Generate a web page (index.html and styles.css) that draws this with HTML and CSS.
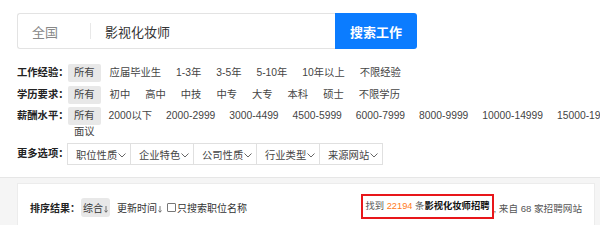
FILE: index.html
```html
<!DOCTYPE html>
<html lang="zh-CN">
<head>
<meta charset="utf-8">
<title>影视化妆师招聘</title>
<link rel="stylesheet" href="styles.css">
</head>
<body>
<div class="page">
  <div class="top">
    <div class="search">
      <div class="search-box">
        <span class="city">全国</span>
        <span class="divider"></span>
        <span class="keyword">影视化妆师</span>
      </div>
      <button class="search-btn">搜索工作</button>
    </div>

    <div class="filters">
      <div class="filter-row">
        <div class="label">工作经验：</div>
        <ul class="options">
          <li class="active">所有</li><li>应届毕业生</li><li>1-3年</li><li>3-5年</li><li>5-10年</li><li>10年以上</li><li>不限经验</li>
        </ul>
      </div>
      <div class="filter-row">
        <div class="label">学历要求：</div>
        <ul class="options">
          <li class="active">所有</li><li>初中</li><li>高中</li><li>中技</li><li>中专</li><li>大专</li><li>本科</li><li>硕士</li><li>不限学历</li>
        </ul>
      </div>
      <div class="filter-row salary">
        <div class="label">薪酬水平：</div>
        <ul class="options">
          <li class="active">所有</li><li>2000以下</li><li>2000-2999</li><li>3000-4499</li><li>4500-5999</li><li>6000-7999</li><li>8000-9999</li><li>10000-14999</li><li>15000-19999</li><li>面议</li>
        </ul>
      </div>
      <div class="more-row">
        <div class="label">更多选项：</div>
        <div class="drops">
          <div class="drop">职位性质<svg class="chev" viewBox="0 0 8 5" width="8" height="5"><path d="M0.5 0.5 L4 4 L7.5 0.5" fill="none" stroke="#666" stroke-width="1"/></svg></div>
          <div class="drop">企业特色<svg class="chev" viewBox="0 0 8 5" width="8" height="5"><path d="M0.5 0.5 L4 4 L7.5 0.5" fill="none" stroke="#666" stroke-width="1"/></svg></div>
          <div class="drop">公司性质<svg class="chev" viewBox="0 0 8 5" width="8" height="5"><path d="M0.5 0.5 L4 4 L7.5 0.5" fill="none" stroke="#666" stroke-width="1"/></svg></div>
          <div class="drop">行业类型<svg class="chev" viewBox="0 0 8 5" width="8" height="5"><path d="M0.5 0.5 L4 4 L7.5 0.5" fill="none" stroke="#666" stroke-width="1"/></svg></div>
          <div class="drop">来源网站<svg class="chev" viewBox="0 0 8 5" width="8" height="5"><path d="M0.5 0.5 L4 4 L7.5 0.5" fill="none" stroke="#666" stroke-width="1"/></svg></div>
        </div>
      </div>
    </div>
  </div>

  <div class="results">
    <div class="card">
      <div class="sort">
        <span class="sort-label">排序结果：</span>
        <span class="sort-item active">综合<svg class="arrow" viewBox="0 0 4 7" width="4" height="7"><path d="M2 0 V6 M0.5 4.5 L2 6.3 L3.5 4.5" fill="none" stroke="#555" stroke-width="0.8"/></svg></span>
        <span class="sort-item">更新时间<svg class="arrow" viewBox="0 0 4 7" width="4" height="7"><path d="M2 0 V6 M0.5 4.5 L2 6.3 L3.5 4.5" fill="none" stroke="#555" stroke-width="0.8"/></svg></span>
        <label class="check"><span class="box"></span>只搜索职位名称</label>
      </div>
      <div class="summary">
        <span class="found">找到 <em class="num">22194</em> 条<strong>影视化妆师招聘</strong></span><span class="from">, 来自 68 家招聘网站</span>
      </div>
    </div>
  </div>
</div>
</body>
</html>
```

FILE: styles.css
```css
html, body {
  margin: 0;
  padding: 0;
  background: #fff;
  overflow: hidden;
}

body {
  font-family: "Liberation Sans", "Noto Sans CJK SC", sans-serif;
  color: #333;
}

.page {
  width: 600px;
  height: 225px;
  overflow: hidden;
}

.top {
  padding: 13px 0 12px 17px;
  border-bottom: 1px solid #e6e6e6;
}

/* search */
.search {
  display: flex;
  height: 36px;
}

.search-box {
  box-sizing: border-box;
  width: 318px;
  height: 36px;
  display: flex;
  align-items: center;
  border: 1px solid #e3e3e3;
  border-right: none;
  border-radius: 3px 0 0 3px;
  font-size: 13px;
}

.city {
  color: #888;
  margin-left: 14px;
  width: 58px;
}

.divider {
  width: 1px;
  height: 16px;
  background: #e8e8e8;
}

.keyword {
  color: #333;
  margin-left: 14px;
}

.search-btn {
  width: 82px;
  height: 36px;
  border: none;
  border-radius: 0 3px 3px 0;
  background: #0b7cff;
  color: #fff;
  font-family: inherit;
  font-size: 13px;
  font-weight: bold;
  padding: 0;
}

/* filters */
.filters {
  width: 622px;
  margin-top: 16px;
  font-size: 10.3px;
}

.filter-row {
  display: flex;
  margin-bottom: 5.5px;
}

.filter-row.salary {
  margin-bottom: 3px;
}

.label {
  width: 51px;
  flex: none;
  font-weight: bold;
  color: #222;
  line-height: 16px;
  white-space: nowrap;
}

.options {
  display: flex;
  flex-wrap: wrap;
  gap: 0 3px;
  list-style: none;
  margin: 0;
  padding: 0;
  flex: 1;
  min-width: 0;
}

.salary .options {
  gap: 0 2px;
}

.options li {
  line-height: 16px;
  height: 16px;
  padding: 0 6px;
  color: #444;
  white-space: nowrap;
}

.options li.active {
  background: #e8e8e8;
  border-radius: 2px;
  padding: 1px 6px;
  margin: -1px 0;
}

.more-row {
  display: flex;
  align-items: center;
  font-size: 10.3px;
}

.more-row .label {
  line-height: 22px;
}

.drops {
  display: flex;
  margin-left: -1px;
}

.drop {
  box-sizing: border-box;
  width: 64px;
  height: 22px;
  border: 1px solid #e0e0e0;
  margin-right: -1px;
  display: flex;
  align-items: center;
  padding-left: 8px;
  color: #444;
  white-space: nowrap;
}

.chev {
  margin-left: 1px;
  margin-top: 3px;
}

/* results */
.results {
  background: #f5f5f5;
  padding: 5px 5px 0 17px;
  height: 60px;
}

.card {
  box-sizing: border-box;
  width: 578px;
  height: 60px;
  background: #fff;
  border: 1px solid #ececec;
  border-bottom: none;
  display: flex;
  justify-content: space-between;
  align-items: flex-start;
  padding: 10px 12px 0 12px;
  font-size: 10px;
}

.sort {
  display: flex;
  align-items: center;
  height: 19px;
  margin-top: 4px;
  white-space: nowrap;
}

.sort-label {
  font-weight: bold;
  color: #222;
  margin-right: 1px;
}

.sort-item {
  display: flex;
  align-items: center;
  height: 19px;
  padding: 0 2px;
  color: #333;
}

.sort-item.active {
  background: #e8e8e8;
  border-radius: 3px;
  margin-right: 5px;
}

.arrow {
  margin-left: 1px;
  margin-top: 4px;
}

.check {
  display: flex;
  align-items: center;
  margin-left: 3px;
  color: #333;
}

.box {
  box-sizing: border-box;
  width: 9px;
  height: 9px;
  border: 1px solid #777;
  border-radius: 1px;
  margin-right: 1px;
}

.summary {
  display: flex;
  align-items: center;
  color: #555;
  font-size: 9.6px;
  white-space: nowrap;
}

.found {
  border: 2px solid #e8161a;
  height: 21px;
  line-height: 21px;
  padding: 0 2px 0 2px;
  font-size: 9.3px;
}

.num {
  font-style: normal;
  color: #ff7a1a;
}

.found strong {
  color: #111;
}

.from {
  margin-top: 2px;
}
```
